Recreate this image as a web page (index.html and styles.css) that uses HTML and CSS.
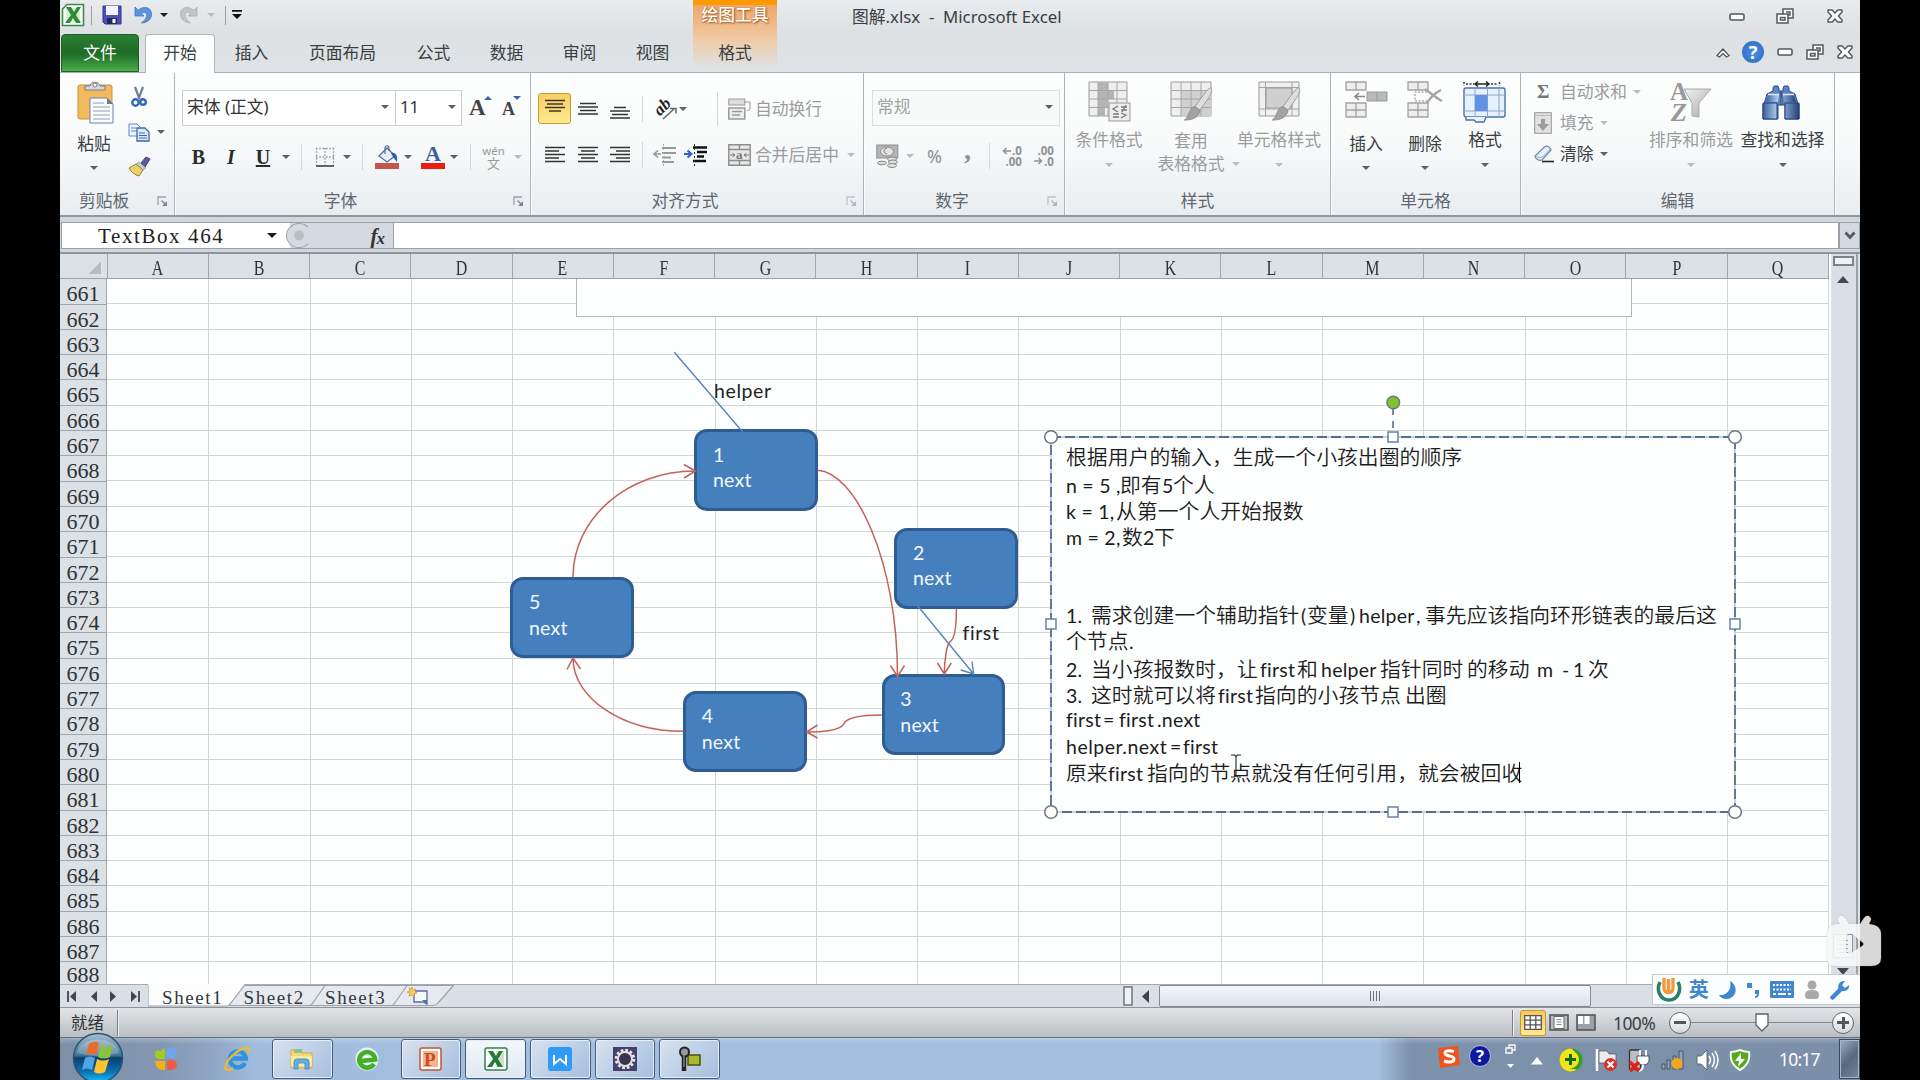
FILE: index.html
```html
<!DOCTYPE html>
<html lang="zh-CN">
<head>
<meta charset="utf-8">
<title>图解.xlsx - Microsoft Excel</title>
<link rel="stylesheet" href="styles.css">
</head>
<body>
<svg class="defs" width="0" height="0">
  <defs>
    <linearGradient id="gOrb" x1="0" y1="0" x2="0" y2="1"><stop offset="0" stop-color="#a9c0cf"/><stop offset=".45" stop-color="#3f7395"/><stop offset=".5" stop-color="#0b3d6b"/><stop offset=".8" stop-color="#0c77b8"/><stop offset="1" stop-color="#19c3f7"/></linearGradient>
    <linearGradient id="gGrey" x1="0" y1="0" x2="1" y2="1"><stop offset="0" stop-color="#f2f2f2"/><stop offset="1" stop-color="#a9a9a9"/></linearGradient>
    <linearGradient id="gBlue" x1="0" y1="0" x2="1" y2="0"><stop offset="0" stop-color="#3a5f9e"/><stop offset=".4" stop-color="#b4cdf0"/><stop offset="1" stop-color="#23407c"/></linearGradient>
    <symbol id="min" viewBox="0 0 16 9"><rect x="1" y="1" width="14" height="6" rx="1.5" fill="#fff" stroke="#54585c" stroke-width="1.6"/></symbol>
    <symbol id="restore" viewBox="0 0 18 16"><path d="M7 1h10v9h-5v5H1V6h6z" fill="#fff" stroke="#54585c" stroke-width="1.5"/><path d="M4.500 9.500h4.500v2.500h-4.500zM10 4h4v3h-2M7 6h5v4" fill="none" stroke="#54585c" stroke-width="1.500"/></symbol>
    <symbol id="close" viewBox="0 0 16 14"><path d="M1 1h4.200L8 4l2.800-3H15v2l-3.600 4L15 11v2h-4.200L8 10l-2.800 3H1v-2l3.600-4L1 3z" fill="#fff" stroke="#54585c" stroke-width="1.400" stroke-linejoin="round"/></symbol>
    <symbol id="launch" viewBox="0 0 11 11"><path d="M1 9V1h8" fill="none" stroke="#9aa0a6" stroke-width="1.300"/><path d="M4.500 4.500l4 4" stroke="#80868c" stroke-width="1.400"/><path d="M10 5v5H5z" fill="#80868c"/></symbol>
    <symbol id="brushGrey" viewBox="0 0 30 36"><path d="M28 1c2 2 1 5-2 10l-9 13-5-4L23 5c2-3 4-4 5-4z" fill="#dedede" stroke="#9c9c9c"/><path d="M11 20l6 4c-1 7-7 10-16 10 5-3 4-11 10-14z" fill="#a3a3a3" stroke="#8c8c8c"/></symbol>
  </defs>
</svg>

<div class="screen">
  <header class="head">
    <div class="qat">
      <svg class="q-xl" width="24" height="24" viewBox="0 0 24 24"><path d="M6 1.500h16.500v21h-21V6z" fill="#fff" stroke="#3a8a4a" stroke-width="1.600"/><path d="M5 5h14v14H5z" fill="#d9efcf"/><path d="M5 4h5l3 5 3-5h4l-5 8 5 8h-5l-3-5-3 5H4l6-8z" fill="#2f8a3c"/></svg>
      <i class="vline"></i>
      <svg class="q-save" width="20" height="20" viewBox="0 0 20 20"><path d="M1 1h18v18H3l-2-2z" fill="#4c50b4" stroke="#34378c"/><path d="M4 1h12v9H4z" fill="#f1f4ff"/><path d="M5 13h10v6H5z" fill="#23265e"/><path d="M10.500 14h3v4h-3z" fill="#fff"/></svg>
      <svg class="q-undo" width="19" height="20" viewBox="0 0 19 20"><path d="M1 2v9h9L7.300 8.500C11 6 13.500 8 12.500 11.500c-.6 2.500-2.500 4.500-5 6.500 6-.5 10-3.500 10-9C17.500 2 9.500.500 4.200 5.200z" fill="#5b93dc" stroke="#3c74c4" stroke-width=".8"/></svg>
      <i class="dd black q-dd1"></i>
      <svg class="q-redo" width="19" height="20" viewBox="0 0 19 20"><path d="M18 2v9H9l2.700-2.500C8 6 5.500 8 6.500 11.500c.6 2.500 2.500 4.500 5 6.500-6-.5-10-3.500-10-9C1.500 2 9.500.500 14.800 5.200z" fill="#c2c4c6" stroke="#aeb0b2" stroke-width=".8"/></svg>
      <i class="dd pale q-dd2"></i>
      <i class="vline q-v2"></i>
      <svg width="12" height="10" viewBox="0 0 12 10"><path d="M1 0h10v1.800H1zM1 4h10L6 9z" fill="#111"/></svg>
    </div>
    <div class="ctx"><b>绘图工具</b><span>格式</span></div>
    <div class="title">
      <span class="title-text">图解.xlsx&nbsp; -&nbsp; Microsoft Excel</span>
      <svg class="w-a" width="16" height="9"><use href="#min"/></svg>
      <svg class="w-b" width="18" height="16"><use href="#restore"/></svg>
      <svg class="w-c" width="16" height="14"><use href="#close"/></svg>
    </div>
    <nav class="tabs">
      <span class="tab file">文件</span><span class="tab on">开始</span><span class="tab">插入</span><span class="tab wide">页面布局</span><span class="tab">公式</span><span class="tab">数据</span><span class="tab">审阅</span><span class="tab">视图</span>
    </nav>
    <div class="docbtns">
      <svg width="14" height="11" viewBox="0 0 14 11"><path d="M1 8.500L7 2l6 6.500-2.500 1.500L7 6.500 3.500 10z" fill="#fff" stroke="#54585c" stroke-width="1.300"/></svg>
      <span class="help">?</span>
      <svg width="16" height="9"><use href="#min"/></svg>
      <svg width="18" height="16"><use href="#restore"/></svg>
      <svg width="16" height="14"><use href="#close"/></svg>
    </div>
  </header>

  <section class="ribbon">
    <div class="group g-clip">
      <div class="body">
        <div class="big">
          <svg width="38" height="44" viewBox="0 0 38 44"><rect x="1" y="4" width="34" height="34" rx="2" fill="#f2b95e" stroke="#c8913f"/><path d="M8 8V5h5c1-5 9-5 10 0h5v4H8z" fill="#d6d9dd" stroke="#777c83"/><circle cx="18" cy="4" r="2" fill="#fff" stroke="#777c83"/><path d="M13 17h17l6 6v19H13z" fill="#fbfcff" stroke="#6a82a8"/><path d="M30 17v6h6z" fill="#6b7c98"/><path d="M16 22h11M16 26h17M16 30h17M16 34h17M16 38h17" stroke="#b4bccb" stroke-width="1.300"/></svg>
          <span>粘贴</span><i class="dd"></i>
        </div>
        <div class="stack">
          <svg width="16" height="22" viewBox="0 0 16 22"><path d="M4 1l4.500 12M12 1L7.500 13" stroke="#6f7f95" stroke-width="2.200"/><circle cx="4.500" cy="16.500" r="3.200" fill="none" stroke="#3467b8" stroke-width="2.400"/><circle cx="12" cy="16" r="2.800" fill="none" stroke="#3467b8" stroke-width="2.400"/></svg>
          <div class="copy"><svg width="22" height="19" viewBox="0 0 22 19"><path d="M1 1h8l3 3v9H1z" fill="#eef4ff" stroke="#5f86c2"/><path d="M3 5h5M3 8h6" stroke="#5f86c2"/><path d="M9 5h8l4 4v9H9z" fill="#dce9fc" stroke="#3a68b0" stroke-width="1.300"/><path d="M11 10h6M11 12.500h8M11 15h8" stroke="#3a68b0"/></svg><i class="dd"></i></div>
          <svg width="23" height="21" viewBox="0 0 23 21"><path d="M13 7l5-6 4 2-5 8z" fill="#5c5a9c" stroke="#45437c"/><path d="M11 6l7 6-3 2-7-6z" fill="#c9ccd4" stroke="#80838c" stroke-width=".6"/><path d="M8 8l7 6-4 6c-4-1-8-4-10-8z" fill="#ecd06a" stroke="#96803c"/></svg>
        </div>
      </div>
      <footer>剪贴板<svg width="11" height="11"><use href="#launch"/></svg></footer>
    </div>

    <div class="group g-font">
      <div class="body col">
        <div class="combos">
          <div class="combo c-font">宋体 (正文)<i class="dd"></i></div><div class="combo c-size">11<i class="dd"></i></div>
          <span class="grow">A<i class="up"></i></span><span class="grow small">A<i class="down"></i></span>
        </div>
        <div class="row2">
          <b class="ser">B</b><b class="ser it">I</b><b class="ser un">U</b><i class="dd"></i><i class="vsep"></i>
          <svg width="20" height="20" viewBox="0 0 20 20"><path d="M1.500 1v17M10 1v17M18.500 1v17M1 1.500h18M1 10h18" stroke="#8b8f94" stroke-width="1.300" stroke-dasharray="1.500 1.800"/><path d="M1 19h18" stroke="#333" stroke-width="1.500"/></svg>
          <i class="dd"></i><i class="vsep"></i>
          <svg width="24" height="24" viewBox="0 0 24 24"><path d="M4 11l8-8 8 8-8 6z" fill="#e9eff8" stroke="#4f6f9f" stroke-width="1.300"/><path d="M10 9V3c0-3 4-3 4 0v3" fill="none" stroke="#4f6f9f" stroke-width="1.200"/><path d="M16 8c4-1 7 2 6 9l-4-5z" fill="#2d5ca8"/><path d="M0 18h24v6H0z" fill="#c6564b"/></svg>
          <i class="dd"></i>
          <span class="fontcolor">A</span>
          <i class="dd"></i><i class="vsep"></i>
          <span class="wen"><small>wén</small><span>文</span></span><i class="dd pale"></i>
        </div>
      </div>
      <footer>字体<svg width="11" height="11"><use href="#launch"/></svg></footer>
    </div>

    <div class="group g-align">
      <div class="body col">
        <div class="r1">
          <span class="sel"><svg width="20" height="14" viewBox="0 0 20 14"><path d="M0 1.500h20M2 5h16M0 8.500h20M4 12h12" stroke="#3c3420" stroke-width="1.700"/></svg></span>
          <svg width="20" height="14" viewBox="0 0 20 14"><path d="M2 1.500h16M0 5h20M2 8.500h16M0 12h20" stroke="#333" stroke-width="1.700"/></svg>
          <svg class="low" width="20" height="14" viewBox="0 0 20 14"><path d="M4 1.500h12M0 5h20M2 8.500h16M0 12h20" stroke="#333" stroke-width="1.700"/></svg>
          <i class="vsep"></i>
          <span class="ab"><em>ab</em><svg width="16" height="14" viewBox="0 0 16 14"><path d="M1 13L12 3M8 2.500h6v5" fill="none" stroke="#666" stroke-width="1.500"/></svg></span>
          <i class="dd"></i><i class="vsep long"></i>
          <svg width="23" height="22" viewBox="0 0 23 22"><rect x=".8" y="1" width="16" height="6" fill="#ddd" stroke="#999"/><path d="M16 4h6v7l-3 2" fill="none" stroke="#999"/><rect x=".8" y="10" width="16" height="11" fill="#eee" stroke="#999" stroke-width="1.500"/><path d="M4 13.500h10M4 17h8" stroke="#999" stroke-width="1.400"/></svg>
          <span class="dis lbl">自动换行</span>
        </div>
        <div class="r2">
          <svg width="20" height="18" viewBox="0 0 20 18"><path d="M0 1.500h20M0 5h14M0 8.500h20M0 12h14M0 15.500h20" stroke="#333" stroke-width="1.700"/></svg>
          <svg width="20" height="18" viewBox="0 0 20 18"><path d="M0 1.500h20M3 5h14M0 8.500h20M3 12h14M0 15.500h20" stroke="#333" stroke-width="1.700"/></svg>
          <svg width="20" height="18" viewBox="0 0 20 18"><path d="M0 1.500h20M6 5h14M0 8.500h20M6 12h14M0 15.500h20" stroke="#333" stroke-width="1.700"/></svg>
          <i class="vsep"></i>
          <svg width="23" height="22" viewBox="0 0 23 22"><path d="M9 4h14M9 9h14M9 13.500h9M9 18h12" stroke="#999" stroke-width="2"/><path d="M10.500 0v22" stroke="#aaa" stroke-dasharray="2 2"/><path d="M8 10H1M5 6.500L1 10l4 3.500" fill="none" stroke="#999" stroke-width="1.600"/></svg>
          <svg width="23" height="22" viewBox="0 0 23 22"><path d="M9 3.500h14M13 8h10M13 12.500h7M9 17h13" stroke="#111" stroke-width="2.600"/><path d="M10.500 0v22" stroke="#333" stroke-dasharray="2 2"/><path d="M0 10h6M3.500 6.500L7.500 10l-4 3.500" fill="none" stroke="#2d62c8" stroke-width="2"/></svg>
          <i class="gap"></i>
          <svg width="23" height="22" viewBox="0 0 23 22"><path d="M.8.800h21.400v20.400H.8z" fill="#e8e8e8" stroke="#8c8c8c" stroke-width="1.400"/><path d="M1 5.500h21M1 16.500h21M11.500 1v4M11.500 17v4" stroke="#8c8c8c" stroke-width="1.400"/><text x="8" y="15" font-family="Liberation Serif" font-weight="bold" font-size="13" fill="#777">a</text><path d="M2 11h5M16 11h5M4.500 9L7 11l-2.500 2M18.500 9L16 11l2.500 2" stroke="#777" fill="none"/></svg>
          <span class="dis lbl">合并后居中</span><i class="dd pale"></i>
        </div>
      </div>
      <footer>对齐方式<svg width="11" height="11" class="faint"><use href="#launch"/></svg></footer>
    </div>

    <div class="group g-num">
      <div class="body col">
        <div class="combo c-num">常规<i class="dd"></i></div>
        <div class="rn">
          <svg width="23" height="24" viewBox="0 0 23 24"><rect x=".8" y="1" width="21" height="13" fill="#b5b5b5" stroke="#8e8e8e"/><ellipse cx="11" cy="7.500" rx="6.500" ry="4.500" fill="#e4e4e4" stroke="#8e8e8e"/><path d="M11 4c-4 1-4 5 0 6" fill="none" stroke="#777"/><ellipse cx="16" cy="15" rx="4.500" ry="2" fill="#e2e2e2" stroke="#888"/><ellipse cx="17" cy="18" rx="4.500" ry="2" fill="#e2e2e2" stroke="#888"/><ellipse cx="16" cy="21.500" rx="4.500" ry="2" fill="#e2e2e2" stroke="#888"/><ellipse cx="6" cy="19" rx="4.500" ry="1.800" fill="#ddd" stroke="#888"/></svg>
          <i class="dd pale"></i><span class="pct">%</span><b class="comma">,</b><i class="vsep"></i>
          <span class="dec"><span><svg width="9" height="8" viewBox="0 0 9 8"><path d="M9 4H1.500M4.500 1L1.500 4l3 3" fill="none" stroke="#8e9092" stroke-width="1.500"/></svg>.0</span><span>.00</span></span>
          <span class="dec"><span>.00</span><span><svg width="9" height="8" viewBox="0 0 9 8"><path d="M0 4h7.500M4.500 1l3 3-3 3" fill="none" stroke="#8e9092" stroke-width="1.500"/></svg>.0</span></span>
        </div>
      </div>
      <footer>数字<svg width="11" height="11" class="faint"><use href="#launch"/></svg></footer>
    </div>

    <div class="group g-style">
      <div class="body">
        <div class="big dis s1">
          <svg width="43" height="41" viewBox="0 0 43 41"><path d="M1 1h38v34H1z" fill="#efefef" stroke="#9a9a9a"/><path d="M10 1h10v8h6v9h-6v8h-3v9h-7z" fill="#b4b4b4"/><path d="M1 9.500h38M1 18h38M1 26.500h38M10 1v34M20 1v34M29 1v34" stroke="#a6a6a6" fill="none"/><rect x="21" y="22" width="21" height="18" fill="#ededed" stroke="#999"/><path d="M30 25l-5 3 5 3M25 33h6M25 36h6M33 26h6M33 29h6M38 24l-4 7M33 32l5 2-5 3" fill="none" stroke="#777" stroke-width="1.300"/></svg>
          <span>条件格式</span><i class="dd pale"></i>
        </div>
        <div class="big dis s2">
          <svg width="43" height="41" viewBox="0 0 43 41"><path d="M1 1h40v34H1z" fill="#efefef" stroke="#9a9a9a"/><path d="M11 9.500h30V35H11z" fill="#d0d0d0"/><path d="M1 9.500h40M1 18h40M1 26.500h40M11 1v34M21 1v34M31 1v34" stroke="#a6a6a6" fill="none"/><use href="#brushGrey" x="13" y="6" width="30" height="35"/></svg>
          <span>套用</span><span class="line2">表格格式<i class="dd pale"></i></span>
        </div>
        <div class="big dis s3">
          <svg width="43" height="41" viewBox="0 0 43 41"><path d="M1 1h40v34H1z" fill="#efefef" stroke="#9a9a9a"/><path d="M1 6.500h40M1 28h40M7.500 1v34M34 1v34" stroke="#a6a6a6" fill="none"/><path d="M8 7h26v20H8z" fill="#cfcfcf" stroke="#9a9a9a"/><use href="#brushGrey" x="13" y="6" width="30" height="35"/></svg>
          <span>单元格样式</span><i class="dd pale"></i>
        </div>
      </div>
      <footer>样式</footer>
    </div>

    <div class="group g-cell">
      <div class="body">
        <div class="big c1">
          <svg width="43" height="41" viewBox="0 0 43 41"><path d="M1 1h20v8H1zM11 1v8M1 22h20v14H1zM11 22v14M1 29h20" fill="#eee" stroke="#a2a2a2" stroke-width="1.300"/><path d="M22 11h20v9H22zM32 11v9" fill="#b9b9b9" stroke="#999"/><path d="M20 15.500H10M14 12l-4 3.500 4 3.500" fill="none" stroke="#888" stroke-width="1.600"/></svg>
          <span>插入</span><i class="dd"></i>
        </div>
        <div class="big c2">
          <svg width="36" height="41" viewBox="0 0 36 41"><path d="M1 1h20v8H1zM11 1v8M1 22h20v14H1zM11 22v14M1 29h20" fill="#eee" stroke="#a2a2a2" stroke-width="1.300"/><path d="M20 11H8v9h12" fill="none" stroke="#888" stroke-dasharray="2 1.500"/><path d="M18 8c6 4 11 9 17 12M34 9c-6 3-11 8-14 13" fill="none" stroke="#a5a5a5" stroke-width="2.400"/></svg>
          <span>删除</span><i class="dd"></i>
        </div>
        <div class="big c3">
          <svg width="44" height="42" viewBox="0 0 44 42"><path d="M1 1v4M36.500 1v4M3 3h8M28 3h7" stroke="#333" stroke-width="1.500" stroke-dasharray="2 1.500"/><path d="M12 3h14M15 .500L12 3l3 2.500M23 .500L26 3l-3 2.500" fill="none" stroke="#222" stroke-width="1.500"/><rect x="1" y="7" width="41" height="29" rx="2" fill="#e7f0fd" stroke="#4a6fae" stroke-width="1.400"/><path d="M1 14h41M1 30h41M12 7v29M24.500 7v29M36 7v29" stroke="#8ba6d2" fill="none"/><path d="M12 14h12.500v16H12z" fill="#5f92e4"/><path d="M3 36v3h8l2 2h8l2-5" fill="#eef4fd" stroke="#4a6fae" stroke-width="1.300"/></svg>
          <span>格式</span><i class="dd"></i>
        </div>
      </div>
      <footer>单元格</footer>
    </div>

    <div class="group g-edit">
      <div class="body">
        <div class="elist">
          <div class="dis"><span class="sigma">Σ</span><span>自动求和</span><i class="dd pale"></i></div>
          <div class="dis"><svg width="18" height="22" viewBox="0 0 18 22"><rect x=".7" y=".7" width="16.600" height="20.600" fill="#e3e0e3" stroke="#979797"/><path d="M1 3.500h16" stroke="#bbb"/><path d="M7 7h4v5h4l-6 7-6-7h4z" fill="#9d9d9d"/></svg><span>填充</span><i class="dd pale"></i></div>
          <div><svg width="20" height="18" viewBox="0 0 20 18"><path d="M1 11L11 1.500c2-1 6 1 6 3.500L8 15c-3 1-7-1-7-4z" fill="#e8f0fb" stroke="#6f86aa" stroke-width="1.200"/><path d="M1.500 11c2 2 4 2 7 1l8-8" fill="none" stroke="#8fa5c6"/><path d="M8 16.500h12" stroke="#222" stroke-width="1.600"/></svg><span>清除</span><i class="dd"></i></div>
        </div>
        <div class="big dis e2">
          <svg width="42" height="42" viewBox="0 0 42 42"><path d="M14 8h27L29 22v14l-7-1V22z" fill="url(#gGrey)" stroke="#aaa"/><text x="0" y="19" font-family="Liberation Serif" font-weight="bold" font-size="25" fill="#999">A</text><text x="1" y="40" font-family="Liberation Serif" font-weight="bold" font-style="italic" font-size="26" fill="#999">Z</text></svg>
          <span>排序和筛选</span><i class="dd pale"></i>
        </div>
        <div class="big e3">
          <svg width="38" height="36" viewBox="0 0 38 36"><path d="M12 1h4l1 3v2h2l1 8v6h-4v14H1V19h1l3-10 6-3V3zM26 1h-4l-1 3v2h-2v14h4v14h14V19h-1L33 9l-6-3V3z" fill="#5c84c0" stroke="#2c4a82"/><path d="M1 18h14v16H1zM23 18h14v16H23z" fill="url(#gBlue)" stroke="#243f74"/><path d="M6 10h11l-1 7H4zM21 10h11l2 7H22z" fill="url(#gBlue)"/><path d="M6 9.500h11M21 9.500h11" stroke="#dbe7f8" stroke-width="1.300"/></svg>
          <span>查找和选择</span><i class="dd"></i>
        </div>
      </div>
      <footer>编辑</footer>
    </div>
    <div class="group rest"></div>
  </section>

  <section class="fbar">
    <div class="namebox"><span>TextBox 464</span><i class="dd black"></i></div>
    <div class="fxbox"><i class="knob"></i><em>f<sub>x</sub></em></div>
    <div class="finput"></div>
    <div class="fexp"><svg width="12" height="9" viewBox="0 0 12 9"><path d="M1.500 1.500L6 6.500l4.500-5" fill="none" stroke="#555a5f" stroke-width="2.800"/></svg></div>
  </section>

  <section class="sheet">
    <div class="sheetmain">
      <div class="colheads" id="cols"><span class="corner"></span></div>
      <div class="rows">
        <div class="rowheads" id="rows"></div>
        <div class="canvas">
          <svg class="lines" id="lines" width="1725" height="705"></svg>
          <div class="emptybox"></div>
          <div class="node n1">1<br>next</div>
          <div class="node n2">2<br>next</div>
          <div class="node n3">3<br>next</div>
          <div class="node n4">4<br>next</div>
          <div class="node n5">5<br>next</div>
          <svg class="links" width="1725" height="705" viewBox="107 279 1725 705">
            <g fill="none" stroke="#c4625c" stroke-width="1.500">
              <path d="M573 577C573 518 628 471 695 471M684 464.500L695.500 471l-11.500 7"/>
              <path d="M817.500 470.300C855 472 897.500 560 897.500 676M890.500 665.500l7 11 7-11"/>
              <path d="M956.400 608.700C956.400 622 955 639 950 641.700C947 644 944.300 660 944.300 674M937.500 663l6.800 11 7-11"/>
              <path d="M881.800 715C862 715 846 717 843.600 724.300C840 730 822 732.300 807 732M817.500 725l-11 7 11 6"/>
              <path d="M683.200 731.300C622 731 573 698 573 658M567 669.500l6-11.500 7.500 11"/>
            </g>
            <g fill="none" stroke="#5585be" stroke-width="1.400"><path d="M674.300 352.300L742.500 431.700M917 605L973.600 674M972 661.500l1.600 12.500-13-4"/></g>
          </svg>
          <span class="tag t-helper">helper</span>
          <span class="tag t-first">first</span>
          <div class="note">
            <svg class="frame" width="686" height="377" viewBox="0 0 686 377"><rect x="1" y="1" width="684" height="375" fill="none" stroke="#b9c6d6" stroke-width="1.500"/><rect x="1" y="1" width="684" height="375" fill="none" stroke="#556f93" stroke-width="1.800" stroke-dasharray="10 4"/></svg>
            <div class="ln a1 lift"><span>根据用户的输入，生成一个小孩出圈的顺序</span></div>
            <div class="ln a2"><i>n = 5 ,</i><span>即有</span><i>5</i><span>个人</span></div>
            <div class="ln a3"><i>k = 1,</i><span>从第一个人开始报数</span></div>
            <div class="ln a4"><i>m = 2,</i><span>数</span><i>2</i><span>下</span></div>
            <div class="ln"></div><div class="ln"></div>
            <div class="ln a5 lift"><i>1.</i><span>需求创建一个辅助指针</span><i>(</i><span>变量</span><i>)</i><i>helper</i><i>,</i><span>事先应该指向环形链表的最后这</span></div>
            <div class="ln a6 lift"><span>个节点</span><i>.</i></div>
            <div class="ln a7"><i>2.</i><span>当小孩报数时，让</span><i>first</i><span>和</span><i>helper</i><span>指针同时</span><span>的移动</span><i>m</i><i>-</i><i>1</i><span>次</span></div>
            <div class="ln a8"><i>3.</i><span>这时就可以将</span><i>first</i><span>指向的小孩节点</span><span>出圈</span></div>
            <div class="ln a9"><i>first</i><i>=</i><i>first</i><i>.next</i></div>
            <div class="ln a10"><i>helper.next</i><i>=</i><i>first</i></div>
            <div class="ln a11 lift"><span>原来</span><i>first</i><span>指向的节点就没有任何引用，就会被回收</span></div>
            <svg class="handles" width="708" height="432" viewBox="-11 -45 708 432">
              <path d="M343 -28V-6" stroke="#556f93" stroke-width="1.600" stroke-dasharray="7 6"/>
              <g fill="#fff" stroke="#70757b" stroke-width="1.500"><circle cx="1" cy="1" r="6.300"/><circle cx="685" cy="1" r="6.300"/><circle cx="1" cy="376" r="6.300"/><circle cx="685" cy="376" r="6.300"/><circle cx="343.300" cy="-33.500" r="6.300" fill="#7ac52b"/></g>
              <g fill="#fff" stroke="#6283a8" stroke-width="1.500"><rect x="338" y="-4" width="10" height="10"/><rect x="338" y="371" width="10" height="10"/><rect x="-4" y="183" width="10" height="10"/><rect x="680" y="183" width="10" height="10"/></g>
            </svg>
            <i class="caret"></i>
            <svg class="ibeam" width="12" height="24" viewBox="0 0 12 24"><path d="M1 1h3.500L6 2.500 7.500 1H11M6 2v20M1 23h3.500L6 21.500 7.500 23H11" fill="none" stroke="#222" stroke-width="1.100"/></svg>
          </div>
        </div>
      </div>
    </div>
    <div class="vscroll">
      <i class="split"></i>
      <svg width="14" height="8" viewBox="0 0 14 8"><path d="M1 8L7 1l6 7z" fill="#44494e"/></svg>
      <i class="space"></i><i class="vthumb"></i>
      <svg width="14" height="8" viewBox="0 0 14 8"><path d="M1 0l6 7 6-7z" fill="#44494e"/></svg>
    </div>
  </section>

  <section class="sheettabs">
    <div class="nav">
      <svg width="10" height="11" viewBox="0 0 10 11"><path d="M1 0v11" stroke="#41464b" stroke-width="1.800"/><path d="M9 0v11L3 5.500z" fill="#41464b"/></svg>
      <svg width="6" height="11" viewBox="0 0 6 11"><path d="M6 0v11L0 5.500z" fill="#41464b"/></svg>
      <svg width="6" height="11" viewBox="0 0 6 11"><path d="M0 0v11l6-5.500z" fill="#41464b"/></svg>
      <svg width="10" height="11" viewBox="0 0 10 11"><path d="M9 0v11" stroke="#41464b" stroke-width="1.800"/><path d="M1 0v11l6-5.500z" fill="#41464b"/></svg>
    </div>
    <div class="tabstrip">
      <svg class="tabshape" width="320" height="24" viewBox="148 984 320 24">
        <path d="M244 985H454L437 1005.500H228z" fill="#e6eaee"/>
        <path d="M148 984H244.500L230 1004q-1 2-4 2H148z" fill="#fdfdfd"/>
        <path d="M244.500 985.500H454M244.500 985.500L229 1005.500H309Q311 1005.500 312 1004L325 985.500M310 1005.500H391Q393 1005.500 394 1004L407 985.500M392 1005.500H432Q436 1005.500 438 1003L453.500 985.500M148 985v21h80" fill="none" stroke="#9aa1a9" stroke-width="1.200"/>
      </svg>
      <span>Sheet1</span><span>Sheet2</span><span>Sheet3</span>
      <svg width="22" height="18" viewBox="0 0 22 18"><path d="M7 4h13v13l-4-2H7z" fill="#f4f7fd" stroke="#5669a4" stroke-width="1.300"/><path d="M20 17l-5-4h5z" fill="#5669a4"/><path d="M5 0l1 3 3-1-1 3 2 1-3 1 0 3-2-2-3 1 1-3-3-1 3-1-1-3 2 1z" fill="#f8ca6a" stroke="#d89a35" stroke-width=".8"/></svg>
    </div>
    <i class="hsplit"></i>
    <svg class="harrow" width="7" height="13" viewBox="0 0 7 13"><path d="M7 0v13L0 6.500z" fill="#3d4247"/></svg>
    <div class="hthumb"><i></i><i></i><i></i><i></i></div>
    <div class="ime">
      <svg width="26" height="26" viewBox="0 0 26 26"><path d="M4 5c-4 8 0 18 9 18s13-10 9-18" fill="none" stroke="#2c8069" stroke-width="3.600"/><path d="M8 1v10c0 6 9 6 9 0V1M12.500 2v12" fill="none" stroke="#f09a3a" stroke-width="3.400"/></svg>
      <b>英</b>
      <svg width="18" height="18" viewBox="0 0 18 18"><path d="M11 0c9 5 7 18-4 18-3 0-6-2-7-4 8 1 13-6 11-14z" fill="#4187d0"/></svg>
      <svg width="12" height="18" viewBox="0 0 12 18"><path d="M0 2h5v5H0zM8 9h4v4q0 3-4 4v-2q2 0 2-2H8z" fill="#4187d0"/></svg>
      <svg width="24" height="17" viewBox="0 0 24 17"><rect width="24" height="17" rx="1" fill="#4187d0"/><path d="M3 4h18M3 8.500h18" stroke="#fff" stroke-width="2" stroke-dasharray="2 1.500"/><path d="M3 13h3M8 13h8M18 13h3" stroke="#fff" stroke-width="1.800"/></svg>
      <svg width="14" height="20" viewBox="0 0 14 20"><circle cx="7" cy="5" r="4.500" fill="#a9a9a9"/><path d="M0 15q0-5 7-5t7 5q0 4-3 4H3q-3 0-3-4z" fill="#a9a9a9"/></svg>
      <svg width="20" height="20" viewBox="0 0 20 20"><path d="M2.500 17.500l9-9" stroke="#4187d0" stroke-width="4.500" stroke-linecap="round"/><path d="M15 1c-6-1-8 5-6 9 5 3 11 0 10-5l-4 3-3-3z" fill="#4187d0"/></svg>
    </div>
  </section>

  <section class="status">
    <span class="ready">就绪</span><i class="ssep"></i>
    <i class="fill"></i><i class="ssep"></i>
    <span class="vsel"><svg width="18" height="15" viewBox="0 0 18 15"><path d="M.7.700h16.600v13.600H.7zM1 5.200h16M1 9.800h16M6.200 1v13M11.800 1v13" fill="#fff" stroke="#555" stroke-width="1.300"/></svg></span>
    <svg class="v2" width="20" height="17" viewBox="0 0 20 17"><rect x="1" y="1" width="18" height="15" fill="#b9bcbf" stroke="#55585b" stroke-width="1.600"/><path d="M5 2.500h10v12H5z" fill="#fff" stroke="#666"/><path d="M7.500 5.500h5M7.500 8h5M7.500 10.500h5" stroke="#888"/></svg>
    <svg class="v3" width="20" height="17" viewBox="0 0 20 17"><rect x="1" y="1" width="18" height="15" fill="#9da1a5" stroke="#55585b" stroke-width="1.600"/><path d="M2 2h5v8H2zM8.500 2h5v8h-5z" fill="#fff"/></svg>
    <span class="zoom">100%</span>
    <div class="slider"><span class="zb minus"></span><span class="track"><svg width="14" height="19" viewBox="0 0 14 19"><path d="M1 1h12v11l-6 6-6-6z" fill="#fff" stroke="#5d6165" stroke-width="1.300"/></svg></span><span class="zb plus"></span></div>
  </section>

  <footer class="taskbar">
    <svg class="orb" width="52" height="52" viewBox="0 0 52 52"><circle cx="26" cy="26" r="24.500" fill="url(#gOrb)" stroke="#2a5475" stroke-width="1.500"/><path d="M5 21C8 3 44 3 47 21q-21 6-42 0z" fill="#fff" opacity=".22"/><path d="M17 12q6-4 10-1l-3 12q-5-3-10 0z" fill="#ec6a2c"/><path d="M29 13q5 3 12 0l-3 12q-7 3-12 0z" fill="#8cc240"/><path d="M13 26q5-3 10 0l-3 12q-5-3-10 0z" fill="#4fa7e6"/><path d="M25 27q6 3 12 0l-4 13q-6 3-11 0z" fill="#fbc430"/></svg>
    <svg class="k-petal" width="24" height="24" viewBox="0 0 24 24"><path d="M11 1v11H5q-5-2-4-6 2-5 6-1 0-3 4-4z" fill="#a4cc1f"/><circle cx="17.500" cy="6" r="5.500" fill="#6ea6f0"/><path d="M1 14h10v9q-9 1-10-9z" fill="#f6b012"/><path d="M13 13q10-1 10 5t-10 5z" fill="#ed5c42"/></svg>
    <svg class="k-ie" width="26" height="26" viewBox="0 0 26 26"><path d="M21 17a8 8 0 1 1 .8-4.500H7" fill="none" stroke="#2f93e0" stroke-width="4.400"/><path d="M2 24C-2 17 16 0 24 2q2 2-1 6M2 24q3 1 7-2" fill="none" stroke="#f2b92d" stroke-width="2.200"/></svg>
    <span class="tb"><svg width="24" height="22" viewBox="0 0 24 22"><path d="M1 2h8l2 3h11v15H1z" fill="#f6d978" stroke="#d2a94a"/><path d="M4 1h8v4H4z" fill="#8dc28a"/><path d="M1 8h21v10H1z" fill="#fae9a2"/><path d="M4 21v-7q0-3 3-3h9q3 0 3 3v7h-4v-6H8v6z" fill="#5db2e6" stroke="#3b86bd" stroke-width=".8"/></svg></span>
    <svg class="k-e" width="24" height="24" viewBox="0 0 24 24"><circle cx="12" cy="12" r="11.500" fill="#fff" opacity=".8"/><path d="M19 17a8 7.800 0 1 1 1.200-4.500L6 14" fill="none" stroke="#43b02a" stroke-width="4.600"/></svg>
    <span class="tb"><svg width="24" height="24" viewBox="0 0 24 24"><rect x="1" y="1" width="21" height="22" rx="2" fill="#fff" stroke="#c9532c" stroke-width="1.500"/><rect x="4" y="4" width="15" height="16" fill="#f3b290"/><text class="pp" x="5" y="19">P</text></svg></span>
    <span class="tb hot"><svg width="24" height="24" viewBox="0 0 24 24"><rect x="1" y="1" width="22" height="22" rx="2" fill="#fff" stroke="#3b7d4d" stroke-width="1.500"/><path d="M12 4h8v16h-8z" fill="#cfe2c8"/><path d="M4 4h5l3 5 3-5h4l-5 8 5 8h-5l-3-5-3 5H3l6-8z" fill="#257a38"/></svg></span>
    <span class="tb"><svg width="24" height="24" viewBox="0 0 24 24"><rect width="24" height="24" rx="3" fill="#2f9bf7"/><path d="M6 8v9l6-5 6 5V8" fill="none" stroke="#fff" stroke-width="2"/></svg></span>
    <span class="tb"><svg width="24" height="24" viewBox="0 0 24 24"><rect width="24" height="24" fill="#46406a"/><circle cx="12" cy="12" r="8.500" fill="none" stroke="#e8e8e8" stroke-width="3.500" stroke-dasharray="2.600 1.850"/><circle cx="12" cy="12" r="7" fill="#3a3350" stroke="#ddd" stroke-width="2"/></svg></span>
    <span class="tb"><svg width="24" height="26" viewBox="0 0 24 26"><rect x="10" y="9" width="12" height="10" fill="#a9bb2a" stroke="#4a5210" stroke-width="1.500"/><path d="M6 8v17" stroke="#222" stroke-width="4.500"/><circle cx="6.500" cy="6" r="4.500" fill="#999" stroke="#222" stroke-width="2"/><path d="M6 9v12" stroke="#aaa"/></svg></span>
    <i class="fill"></i>
    <div class="tray">
      <svg class="y-s" width="24" height="24" viewBox="0 0 24 24"><path d="M1 3l20-2 2 19-20 3z" fill="#f0541e"/><path d="M17 6.500q-9-2-9 1.500c0 4 9 2 9 6s-6 3.500-10 2" fill="none" stroke="#fff" stroke-width="3"/></svg>
      <span class="y-q">?</span>
      <svg class="y-r" width="11" height="28" viewBox="0 0 11 28"><path d="M4 1h6v5H7v3H1V4h3zM4 4h3v2" fill="none" stroke="#fff" stroke-width="1.300"/><path d="M2 20h7l-3.500 4z" fill="#fff"/></svg>
      <svg class="y-u" width="12" height="8" viewBox="0 0 12 8"><path d="M0 7.500L6 0l6 7.500z" fill="#fff"/></svg>
      <svg class="y-y" width="24" height="24" viewBox="0 0 24 24"><circle cx="12" cy="12" r="11.500" fill="#2f9f2b"/><path d="M12 .500a11.500 11.500 0 0 0 0 23q4 0 6-2Q8 21 8 16l8-12-3-3z" fill="#f4e21a"/><circle cx="11" cy="11.500" r="9" fill="#f4e21a"/><path d="M11.500 6v11M6 11.500h11" stroke="#106a1c" stroke-width="3"/></svg>
      <svg class="y-f" width="23" height="24" viewBox="0 0 23 24"><path d="M2 1v22" stroke="#fff" stroke-width="2.500"/><path d="M4 3h8l2 3h7v9H4z" fill="#e9edf2" stroke="#555" stroke-width=".7"/><circle cx="15.500" cy="16.500" r="6.500" fill="#dd2f24"/><path d="M12.500 13.500l6 6M18.500 13.500l-6 6" stroke="#fff" stroke-width="2.200"/></svg>
      <svg class="y-p" width="22" height="24" viewBox="0 0 22 24"><rect x="1.500" y="2" width="11" height="19" rx="1" fill="#b9bfc6" stroke="#333" stroke-width="1.300"/><path d="M12 2v6M18 2v6" stroke="#fff" stroke-width="2"/><path d="M9 8h12v5q-1 4-5 4h-2q-4 0-5-4z" fill="#fff" stroke="#333" stroke-width=".8"/><path d="M15 17q0 5-4 6" fill="none" stroke="#fff" stroke-width="2"/><path d="M2 14l9 9M11 14l-9 9" stroke="#e02218" stroke-width="3.600"/></svg>
      <svg class="y-n" width="23" height="20" viewBox="0 0 23 20"><path d="M1 14h3v5H1zM6 10h3v9H6zM12 6h3v13h-3zM18 1h4v18h-4z" fill="#93a3b5" stroke="#33465c" stroke-width=".8"/><circle cx="16" cy="13.500" r="5.500" fill="#f6a51e"/></svg>
      <svg class="y-v" width="23" height="22" viewBox="0 0 23 22"><path d="M1 7h4l6-6v20l-6-6H1z" fill="#fff" stroke="#44566b" stroke-width=".8"/><path d="M13 7q3 4 0 8M16 4q5 7 0 14M19 2q6 9 0 18" fill="none" stroke="#fff" stroke-width="1.500"/></svg>
      <svg class="y-d" width="22" height="22" viewBox="0 0 22 22"><path d="M11 1q5 2 9 2 2 12-9 18Q0 15 2 3q4 0 9-2z" fill="#58a81e" stroke="#f2f6ee" stroke-width="2"/><path d="M12 4l-6 8h4l-1 6 7-8h-4z" fill="#fff"/></svg>
      <time>10:17</time>
      <i class="peek"></i>
    </div>
  </footer>
</div>

<svg class="floater" width="56" height="54" viewBox="0 0 56 54"><path fill-rule="evenodd" d="M13 2q3-3 6 1l4 6h11l4-6q3-4 6-1 2 2 0 5l-1 2q12 1 12 10v24q0 8-10 8H10q-9 0-9-9V18q1-9 13-9l-1-2q-2-3 0-5zM20 22v14q1 4 5 2l11-7q3-2 0-4l-10-8q-5-2-6 3z" fill="#fff" fill-opacity=".81"/></svg>
<script src="script.js"></script>
</body>
</html>
```
FILE: styles.css
```css
* { box-sizing: border-box; }
body { margin: 0; background: #000; width: 1920px; height: 1080px; overflow: hidden; position: relative;
  font: 16.8px/20px "Noto Sans", "Noto Sans CJK SC", sans-serif; color: #3a3e42; }
.defs { position: absolute; }
svg { display: block; flex: none; }
i { font-style: normal; }
.screen { width: 1800px; height: 1080px; margin-left: 60px; display: flex; flex-direction: column; background: #dde2e5; overflow: hidden; }
.fill { flex: 1; }
.dd { flex: none; width: 0; height: 0; border: 4px solid transparent; border-top: 4.5px solid #5b6065; border-bottom: 0; }
.dd.black { border-top-color: #1a1a1a; }
.dd.pale { border-top-color: #b9bcbf; }

/* title and tabs */
.head { height: 73px; flex: none; display: grid; grid-template-columns: 633px 84px 1fr; grid-template-rows: 34px 39px;
  background: linear-gradient(#e8ecee, #dde1e3 45%, #dfe3e5); border-bottom: 1px solid #a9aeb3; }
.qat { display: flex; align-items: center; padding: 0 0 4px 1px; grid-row: 1; grid-column: 1; }
.vline { width: 1px; height: 19px; background: #999fa5; margin-left: 6px; }
.q-save { margin-left: 10px; }
.q-undo { margin-left: 12px; }
.q-dd1 { margin-left: 7px; }
.q-redo { margin-left: 11px; }
.q-dd2 { margin-left: 9px; }
.q-v2 { margin: 0 5px 0 10px; }
.ctx { grid-row: 1 / 3; grid-column: 2; height: 68px; display: flex; flex-direction: column; align-items: center; padding-top: 0;
  border-top: 5px solid #ff9900; background: linear-gradient(#eca76a, #f1c8a0 50%, #dfe3e500); }
.ctx b { color: #fff; font-weight: 500; text-shadow: 1px 1px 2px #9b5514, 0 0 1px #9b5514; line-height: 20px; }
.ctx span { margin-top: 18px; }
.title { grid-row: 1; grid-column: 3; display: flex; align-items: center; padding-bottom: 3px; padding-left: 75px; }
.title-text { font-size: 16.8px; margin-right: auto; padding-top: 2px; white-space: nowrap; }
.w-a { margin-right: 31px; margin-top: 3px; }
.w-b { margin-right: 33px; }
.w-c { margin-right: 17px; }
.tabs { grid-row: 2; grid-column: 1; display: flex; padding-left: 1px; }
.tab { width: 73px; text-align: center; line-height: 38px; height: 39px; flex: none; }
.tab.wide { width: 109px; }
.tab.file { width: 78px; margin-right: 6px; height: 38px; color: #fff; background: linear-gradient(#2b7f33, #1f6a27 50%, #3d9d3e 90%, #53b04d); border-radius: 4px 4px 0 0; border: 1px solid #1c6425; line-height: 36px; }
.tab.on { width: 70px; background: #fdfefe; border: 1px solid #b2b7bb; border-bottom: 0; border-radius: 4px 4px 0 0; line-height: 36px; }
.docbtns { grid-row: 2; grid-column: 3; display: flex; align-items: center; justify-content: flex-end; gap: 13px; padding-right: 7px; padding-bottom: 3px; }
.help { width: 22px; height: 22px; border-radius: 50%; background: radial-gradient(#4d8fe0, #2b66c4); color: #fff; font-weight: bold; text-align: center; line-height: 22px; font-size: 18px; margin-left: -1px; }

/* ribbon */
.ribbon { height: 144px; flex: none; display: flex; background: linear-gradient(#fdfefe, #f9fbfb 45%, #e9edf0); border-bottom: 2px solid #90969b; }
.group { flex: none; border-right: 1px solid #adb3b8; box-shadow: 1px 0 0 #fbfcfd; display: flex; flex-direction: column; }
.g-clip { width: 115px; } .g-font { width: 356px; } .g-align { width: 333px; } .g-num { width: 201px; }
.g-style { width: 266px; } .g-cell { width: 190px; } .g-edit { width: 314px; } .group.rest { flex: 1; border: 0; box-shadow: none; }
.body { height: 114px; display: flex; }
.body.col { flex-direction: column; }
.group footer { height: 28px; display: grid; grid-template-columns: 1fr auto 1fr; justify-items: end; align-items: center; color: #5f666e; padding-right: 24px; }
.group footer::before { content: ""; }
.group footer svg { margin-right: -18px; }
.g-style footer, .g-cell footer, .g-edit footer { padding-right: 0; }
.faint { opacity: .55; }
.dis { color: #9b9c9e; }
.big { display: flex; flex-direction: column; align-items: center; white-space: nowrap; height: 97px; padding-top: 8px; }
.big > svg { margin-bottom: auto; }
.big > span { line-height: 22px; }
.big > .dd { margin-top: 11px; }
.g-clip .big { width: 68px; }
.g-clip .big svg { margin-left: 3px; }
.stack { display: flex; flex-direction: column; width: 40px; padding-top: 13px; gap: 13px; }
.stack > svg:first-child { margin-left: 3px; }
.copy { display: flex; align-items: center; gap: 7px; height: 22px; }
.group.g-clip footer { grid-template-columns: 19px auto 1fr; }
.combos { display: flex; padding: 17px 0 0 7px; height: 53px; align-items: stretch; }
.combo { height: 36px; border: 1px solid #cdd1d4; background: #fff; display: flex; align-items: center; justify-content: space-between; padding: 0 6px 3px 4px; line-height: 30px; color: #333; white-space: nowrap; }
.c-font { width: 214px; } .c-size { width: 67px; margin-left: -1px; padding-right: 5px; }
.grow { font: bold 23px/36px "Liberation Serif", serif; color: #444; margin-left: 7px; display: flex; width: 25px; }
.grow.small { font-size: 18px; margin-left: 8px; line-height: 38px; }
.grow i { width: 0; height: 0; border: 4px solid transparent; margin-top: 6px; margin-left: -2px; }
.grow .up { border-bottom-color: #3c65a8; border-top: 0; }
.grow .down { border-top-color: #3c65a8; border-bottom: 0; }
.row2 { display: grid; grid-template-columns: 33px 32px 32px 14px 16px 31px 14px 17px 31px 11px 40px 2px 30px 17px 31px; justify-items: center; align-items: center; padding-left: 7px; height: 61px; white-space: nowrap; }
.ser { font: bold 20px/24px "Liberation Serif", serif; color: #2b2b2b; }
.it { font-style: italic; } .un { text-decoration: underline; }
.vsep { width: 1px; height: 26px; background: #d3d7da; }
.fontcolor { font: bold 22px/18px "Liberation Serif", serif; color: #3c5f9e; border-bottom: 6px solid #ee1c0c; width: 24px; text-align: center; height: 24px; }
.wen { display: flex; flex-direction: column; align-items: center; color: #9a9a9a; }
.wen small { font: 11.5px/11px "Noto Sans", sans-serif; }
.wen span { font: 13px/13px "Noto Sans CJK SC", sans-serif; }
.r1, .r2 { display: grid; justify-items: center; align-items: center; padding-left: 7px; white-space: nowrap; }
.r1 { height: 58px; padding-top: 13px; grid-template-columns: 33px 33px 32px 13px 28px 12px 39px 23px 90px; }
.r2 { height: 48px; grid-template-columns: 33px 33px 32px 13px 31px 31px 17px 23px 91px 17px; }
.long { margin-left: 18px; height: 34px; }
.sel { width: 33px; height: 31px; border: 1px solid #c39a35; border-radius: 3px; background: linear-gradient(#f8cf63, #ffe98f); display: grid; justify-items: center; padding-top: 5px; }
.low { margin-top: 9px; }
.lbl { justify-self: start; padding-left: 4px; }
.ab { display: flex; align-items: flex-end; margin-left: 5px; }
.ab em { font: bold italic 17px/18px "Liberation Serif", serif; transform: rotate(-45deg); color: #222; margin-right: -9px; margin-bottom: 4px; }
.g-num .body { padding: 17px 0 0 8px; }
.c-num { width: 188px; background: #f8fafa; color: #a2a2a2; border-color: #dde0e2; }
.rn { display: grid; grid-template-columns: 31px 13px 37px 29px 14px 32px 32px; height: 60px; align-items: center; justify-items: center; color: #8e9092; white-space: nowrap; }
.pct { font-size: 18px; } .comma { font: bold 28px/16px "Liberation Serif", serif; padding-bottom: 12px; }
.dec { font: bold 11.5px/11px "Open Sans", sans-serif; display: flex; flex-direction: column; align-items: flex-end; }
.dec > span { display: flex; align-items: center; gap: 1px; height: 10.5px; }
.g-style .big > .dd, .c3 > .dd, .e2 > .dd, .e3 > .dd { margin-top: 12px; margin-bottom: 1px; }
.g-style .big, .c3, .e2, .e3 { height: 95px; }
.s1 { width: 88px; } .s2 { width: 76px; } .s3 { width: 98px; margin-left: 1px; }
.g-style .s2 { height: 103px; }
.line2 { display: flex; align-items: center; padding-left: 15px; }
.s2 .line2 { line-height: 24px; }
.line2 .dd { margin-left: 7px; }
.s2 span { white-space: nowrap; }
.c1 { width: 70px; } .c2 { width: 54px; margin-left: -3px; } .c3 { width: 68px; margin-left: -1px; }
.elist { width: 121px; padding: 3px 0 0 13px; white-space: nowrap; }
.elist div { display: grid; grid-template-columns: 20px auto auto; justify-content: start; align-items: center; height: 31px; column-gap: 6px; }
.elist .dd { margin-left: 0; }
.sigma { font: bold 19px/20px "Liberation Serif", serif; color: #777; padding-left: 3px; }
.e2 { width: 98px; } .e3 { width: 85px; }
.e3 svg { margin: 4px 4px auto 0; }

/* formula bar */
.fbar { height: 37px; flex: none; display: flex; padding: 5px 0 5px; background: #d0d7dd; border-bottom: 2px solid #8d959c; }
.fbar > div { border: 1px solid #9aa1a8; height: 27px; background: #fff; }
.fbar > .namebox { width: 229px; border-right: 0; display: flex; align-items: center; padding-left: 36px; font: 21px/28px "Liberation Serif", serif; color: #222; letter-spacing: 1.6px; white-space: nowrap; margin-left: 1px; }
.namebox span { width: 123px; }
.namebox .dd { margin-left: 46px; border-width: 5px 5px 0; }
.fbar > .fxbox { width: 104px; border-left: 0; background: #d5dae0; display: flex; justify-content: space-between; align-items: center; padding-right: 8px; }
.knob { width: 26px; height: 25px; border-radius: 50%; border: 1px solid #9aa1a8; background: radial-gradient(circle at 50% 50%, #b9bec3 25%, #d5dae0 35%); margin-left: -4px; border-right-color: transparent; }
.fxbox em { font: italic bold 21px/24px "Liberation Serif", serif; color: #333; }
.fxbox sub { font-size: 17px; line-height: 0; vertical-align: -1px; margin-left: -1px; }
.finput { flex: 1; margin-left: -1px; }
.fbar > .fexp { width: 21px; background: #d5dae0; display: grid; place-items: center; }

/* sheet */
.sheet { height: 730px; flex: none; display: flex; }
.sheetmain { width: 1771px; overflow: hidden; background: #fdfefe; }
.colheads { display: flex; height: 25.3px; background: #dce1e5; border-bottom: 1px solid #9aa1a8; width: 1768.6px; font: 21px/29px "Liberation Serif", serif; color: #2e3236; }
.colheads span { width: 101.25px; flex: none; border-right: 1px solid #9fa6ac; text-align: center; }
.colheads b { display: inline-block; font-weight: 400; transform: scaleX(.76); }
.colheads .corner { width: 47.5px; background: linear-gradient(135deg, transparent 50%, #b7bcc1 50%) no-repeat 29px 8px / 12px 12px; }
.rows { display: flex; height: 705px; overflow: hidden; }
.rowheads { width: 47px; flex: none; background: #dce1e5; border-right: 1px solid #9fa6ac; font: 22px/30px "Liberation Serif", serif; color: #2e3236; }
.rowheads span { display: block; height: 25.31px; border-bottom: 1px solid #9fa6ac; text-align: center; }
.rowheads span:last-child { line-height: 26px; }
.canvas { position: relative; flex: 1; font: 19.5px/25.3px Lato, "Noto Sans CJK SC", sans-serif; font-variant-ligatures: none; letter-spacing: .25px; }
.lines, .links { position: absolute; left: 0; top: 0; }
.emptybox { position: absolute; left: 469px; top: -2px; width: 1056px; height: 40px; border: 1px solid #b5b7b9; background: #fdfefe; }
.node { position: absolute; width: 123.500px; height: 81.500px; border: 3px solid #2f5d93; border-radius: 13px; background: #467fbe; color: #f3f7fb; padding: 9.500px 0 0 15.500px; }
.n1 { left: 587.400px; top: 150px; } .n2 { left: 787.400px; top: 248.300px; } .n3 { left: 774.800px; top: 394.700px; }
.n4 { left: 576.200px; top: 411.700px; } .n5 { left: 403.400px; top: 297.700px; }
.tag { position: absolute; color: #222; letter-spacing: .6px; }
.t-helper { left: 607px; top: 99px; } .t-first { left: 855.500px; top: 341px; }
.note { position: absolute; left: 943px; top: 157px; width: 686px; height: 377px; background: #fdfefe; padding: 8px 0 0 16px; }
.frame { position: absolute; left: 0; top: 0; }
.handles { position: absolute; left: -11px; top: -45px; }
.caret { position: absolute; left: 469px; top: 326px; width: 1px; height: 21px; background: #000; }
.ibeam { position: absolute; left: 180px; top: 318px; }
.ln { display: grid; height: 26.3px; line-height: 26.3px; white-space: nowrap; color: #1c1c1c; align-items: baseline; }
.lift { transform: translateY(-1px); }
.ln span { font-size: 20.800px; font-family: "Noto Sans CJK SC", sans-serif; font-weight: 350; line-height: 26px; letter-spacing: .05px; }
.ln i { font-size: 19.500px; line-height: 26px; }
.a2 { grid-template-columns: 54px 42px 11px 60px; }
.a3 { grid-template-columns: 50px 1fr; }
.a4 { grid-template-columns: 56px 21px 11px 30px; }
.a5 { grid-template-columns: 25px 210px 6px 43px 9px 57px 9px 1fr; }
.a6 { grid-template-columns: 63px 1fr; }
.a7 { grid-template-columns: 25px 169px 37px 24px 59px 87px 70px 25px 11px 15px 1fr; }
.a8 { grid-template-columns: 25px 127px 37px 150px 1fr; }
.a9 { grid-template-columns: 37px 16px 38px 1fr; }
.a10 { grid-template-columns: 104px 13px 1fr; }
.a10 i:first-child { letter-spacing: .5px; }
.a11 { grid-template-columns: 42px 39px 1fr; }

.vscroll { width: 26px; margin-left: 1px; border-right: 2px solid #9aa1a8; background: #d9dee4; display: flex; flex-direction: column; align-items: center; padding: 2px 2px 8px 0; }
.split { width: 21px; height: 10px; background: #eef1f4; border: 2px solid #7b8288; margin-bottom: 9px; }
.space { flex: 1; }
.vthumb { width: 20px; height: 24px; background: repeating-linear-gradient(#9da3aa 0 1px, #eef1f5 1px 4px) no-repeat center / 10px 13px #eef1f5; border: 1px solid #8d949b; margin-bottom: 10px; }

/* sheet tabs */
.sheettabs { height: 23px; flex: none; display: flex; background: #dbe0e6; border-top: 1px solid #a4abb2; position: relative; }
.nav { width: 88px; display: flex; align-items: center; justify-content: space-between; padding: 0 8px 0 7px; }
.tabstrip { width: 975px; position: relative; display: flex; align-items: center; font: 19px/25px "Liberation Serif", serif; letter-spacing: 1.6px; color: #33373b; padding-left: 14px; }
.tabshape { position: absolute; left: 0; top: -1px; }
.tabstrip span { width: 81.500px; position: relative; top: 1px; }
.tabstrip > svg:last-child { position: relative; }
.hsplit { width: 10px; height: 20px; border: 2px solid #8a9198; background: #f1f3f5; margin-top: 1px; }
.harrow { margin: 5px 0 0 9px; }
.hthumb { margin-left: 10px; width: 432px; height: 22px; border: 1px solid #848b93; border-radius: 2px; background: linear-gradient(#f3f5f8, #dde2ea); display: flex; gap: 2px; align-items: center; justify-content: center; }
.hthumb i { width: 1px; height: 10px; background: #6c7278; }
.ime { position: absolute; right: 0; top: -11px; width: 208px; height: 31px; background: #fcfdfe; border: 1px solid #c5cad0; border-right: 0; display: flex; align-items: center; padding: 0 10px 0 3px; justify-content: space-between; z-index: 2; }
.ime b { color: #4187d0; font-size: 20px; margin: 0 -1px 0 -4px; }

/* status bar */
.status { height: 31px; flex: none; display: flex; align-items: center; border-top: 1px solid #8c939a; border-bottom: 1px solid #66707c; background: linear-gradient(#e3e6e8, #b9bec3); }
.ready { margin-left: 11px; width: 46px; color: #333; font-size: 16.500px; }
.ssep { width: 1px; height: 26px; background: #7b8187; box-shadow: 1px 0 #eef0f2; }
.vsel { width: 26px; height: 26px; margin-left: 7px; border: 1px solid #c39a35; border-radius: 3px; background: linear-gradient(#f6c95a, #ffe98f); display: grid; place-items: center; }
.v2 { margin-left: 3px; } .v3 { margin-left: 7px; }
.zoom { margin-left: 17px; width: 56px; font-size: 17.500px; letter-spacing: -.6px; }
.slider { display: flex; align-items: center; margin-right: 6px; }
.zb { width: 22px; height: 22px; border: 1.500px solid #64696e; border-radius: 50%; background: linear-gradient(#fff, #d7dadd); display: grid; place-items: center; }
.zb::before { content: ""; grid-area: 1/1; width: 12px; height: 3px; background: #555; }
.plus::after { content: ""; grid-area: 1/1; width: 3px; height: 12px; background: #555; }
.track { width: 141px; height: 19px; background: linear-gradient(#82878c, #82878c) no-repeat center / 100% 1px; padding-left: 64px; }

/* taskbar */
.taskbar { height: 42px; flex: none; display: flex; align-items: center; background: linear-gradient(#ffffff40, #ffffff00 6px), linear-gradient(90deg, #7e90a8 0, #8397b1 100px, #8ea5c4 150px, #a2bede 200px, #a3bfdf 1318px, #7e92ac 1350px, #7b8fa9); }
.orb { margin: -3px 0 0 12px; position: relative; }
.k-petal { margin-left: 30px; }
.k-ie { margin: 0 22px 0 46px; }
.tb { width: 60.500px; height: 40px; border: 1.500px solid #4a5c74; border-radius: 3px; box-shadow: inset 0 0 0 1px #e4edf8; background: linear-gradient(135deg, #d8e2f0, #a5bede); display: grid; place-items: center; flex: none; margin-right: 4.200px; }
.tb.hot { background: linear-gradient(#f4f8fc, #dce8f4); }
.pp { font: bold 19px "Liberation Serif", serif; fill: #cf4a1e; }
.k-e { margin: 0 22px 0 18px; }
.tray { display: flex; align-items: center; height: 42px; color: #fff; }
.y-s { margin-bottom: 4px; }
.y-q { width: 22px; height: 22px; border-radius: 50%; background: #0d1aa0; border: 1.500px solid #b6c0dc; text-align: center; font-weight: bold; line-height: 19px; margin: 0 0 6px 8px; }
.y-r { margin-left: 14px; margin-bottom: 2px; }
.y-u { margin-left: 15px; margin-top: 3px; }
.y-y { margin-left: 16px; margin-top: 2px; }
.y-f { margin-left: 12px; margin-top: 2px; }
.y-p { margin-left: 10px; margin-top: 2px; }
.y-n { margin-left: 11px; margin-top: 2px; }
.y-v { margin-left: 12px; margin-top: 2px; }
.y-d { margin-left: 10px; margin-top: 2px; }
.tray time { margin-left: 28px; width: 60px; font-size: 17.500px; letter-spacing: -.8px; }
.peek { width: 21px; height: 40px; border: 1px solid #39475a; box-shadow: inset 0 0 0 1px #a8b6c8; background: linear-gradient(135deg, #9fafc2, #57697f 50%, #7487a0); }

/* player badge over the desktop edge */
.floater { position: absolute; left: 1826px; top: 915px; filter: drop-shadow(0 0 1px #9996); z-index: 5; }
```
FILE: script.js
```js
const cols = document.getElementById('cols');
for (const letter of 'ABCDEFGHIJKLMNOPQ') {
  const s = document.createElement('span');
  const b = document.createElement('b');
  b.textContent = letter;
  s.append(b);
  cols.append(s);
}
const rows = document.getElementById('rows');
for (let n = 661; n <= 688; n++) {
  const s = document.createElement('span');
  s.textContent = n;
  rows.append(s);
}
let d = '';
for (let c = 1; c <= 17; c++) d += `M${Math.round(c * 101.25) + 0.5} 0V705`;
for (let r = 1; r <= 27; r++) d += `M0 ${Math.round(r * 25.31) - 0.5}H1721`;
document.getElementById('lines').innerHTML = `<path d="${d}" stroke="#d3d6d8" fill="none"/>`;
```
